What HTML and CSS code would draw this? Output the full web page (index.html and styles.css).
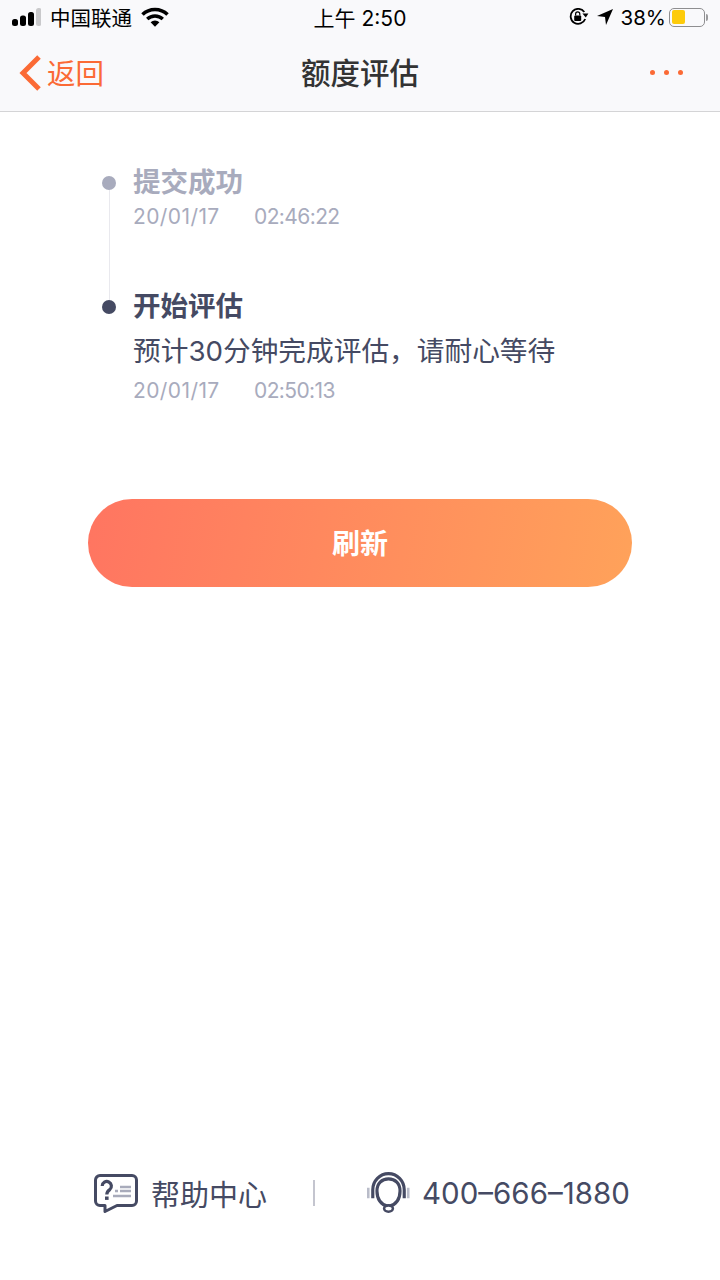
FILE: index.html
```html
<!DOCTYPE html>
<html lang="zh-CN">

<head>
    <meta charset="UTF-8">
    <meta name="viewport" content="width=device-width, initial-scale=1.0">
    <title>额度评估</title>
    <link rel="stylesheet" href="styles.css">
</head>

<body>
    <div class="page">
        <header class="top">
            <div class="status">
                <div class="status-left">
                    <svg class="signal" width="29" height="18" viewBox="0 0 29 18">
                        <rect x="0" y="11" width="6" height="7" rx="2.5" fill="#000" />
                        <rect x="8" y="7.500" width="6" height="10.500" rx="2.500" fill="#000" />
                        <rect x="16" y="4" width="6" height="14" rx="2.500" fill="#000" />
                        <rect x="24" y="0" width="5.500" height="18" rx="2.500" fill="#c9c9cb" />
                    </svg>
                    <span class="carrier">中国联通</span>
                    <svg class="wifi" width="28" height="20" viewBox="0 0 28 20">
                        <path d="M1.500 7.500 A18 18 0 0 1 26.500 7.500" fill="none" stroke="#000" stroke-width="3.600" />
                        <path d="M6.200 12 A11.500 11.500 0 0 1 21.800 12" fill="none" stroke="#000" stroke-width="3.400" />
                        <path d="M9.600 15.200 A6.600 6.600 0 0 1 18.400 15.200 L14 19.800 Z" fill="#000" />
                    </svg>
                </div>
                <div class="status-time">上午 2:50</div>
                <div class="status-right">
                    <svg width="20" height="18" viewBox="0 0 20 18">
                        <path d="M15.300 4 A7.500 7.500 0 1 0 16.200 11" fill="none" stroke="#000" stroke-width="1.800" />
                        <path d="M13.400 5.500 L19.400 5.500 L16.800 9.400 Z" fill="#000" />
                        <rect x="5.200" y="7.400" width="7" height="5.600" rx="1" fill="#000" />
                        <path d="M6.600 7.400 V6 A2.100 2.100 0 0 1 10.800 6 V7.400" fill="none" stroke="#000" stroke-width="1.200" />
                    </svg>
                    <svg class="arrow" width="16" height="16" viewBox="0 0 16 16">
                        <path d="M16 0 L0 7 L8 8 L9 16 Z" fill="#000" />
                    </svg>
                    <span class="percent">38%</span>
                    <div class="battery">
                        <div class="battery-body">
                            <div class="battery-fill"></div>
                        </div>
                        <div class="battery-cap"></div>
                    </div>
                </div>
            </div>
            <nav class="nav">
                <div class="back">
                    <svg width="24" height="38" viewBox="0 0 24 38">
                        <path d="M21 3 L5 19 L21 35" fill="none" stroke="#fb6a35" stroke-width="5" />
                    </svg>
                    <span>返回</span>
                </div>
                <h1 class="nav-title">额度评估</h1>
                <div class="more">
                    <i></i><i></i><i></i>
                </div>
            </nav>
        </header>

        <section class="steps">
            <div class="step step-done">
                <div class="marker">
                    <div class="dot"></div>
                    <div class="line"></div>
                </div>
                <div class="step-body">
                    <div class="step-title">提交成功</div>
                    <div class="step-time"><span>20/01/17</span><span>02:46:22</span></div>
                </div>
            </div>
            <div class="step step-now">
                <div class="marker">
                    <div class="dot"></div>
                </div>
                <div class="step-body">
                    <div class="step-title">开始评估</div>
                    <div class="step-desc">预计30分钟完成评估，请耐心等待</div>
                    <div class="step-time"><span>20/01/17</span><span>02:50:13</span></div>
                </div>
            </div>
        </section>

        <button class="refresh">刷新</button>

        <footer class="foot">
            <div class="help">
                <svg width="44" height="39" viewBox="0 0 44 39">
                    <path d="M6 1.500 H38 A4.500 4.500 0 0 1 42.500 6 V27 A4.500 4.500 0 0 1 38 31.500 H23 L11 37.500 V31.500 H6 A4.500 4.500 0 0 1 1.500 27 V6 A4.500 4.500 0 0 1 6 1.500 Z" fill="none" stroke="#454a63" stroke-width="3" stroke-linejoin="round" />
                    <path d="M8.200 12 A4.600 4.600 0 1 1 15.800 15.600 C13.800 17 12.800 17.800 12.800 20.500" fill="none" stroke="#454a63" stroke-width="3.200" />
                    <rect x="11" y="22.500" width="3.600" height="3.400" fill="#454a63" />
                    <path d="M21 17 H24 M26 13 H37 M26 17 H37 M19 22 H37" stroke="#a8abbb" stroke-width="2.400" fill="none" />
                </svg>
                <span>帮助中心</span>
            </div>
            <div class="foot-line"></div>
            <div class="phone">
                <svg width="43" height="42" viewBox="0 0 41 40">
                    <path d="M1.200 15 V25 M39.300 15 V25" stroke="#b9bcc9" stroke-width="2.500" fill="none" />
                    <path d="M5.500 25 V17 A15 15.500 0 0 1 35.500 17 V25" fill="none" stroke="#454a63" stroke-width="3" />
                    <path d="M20.500 33 C13 31 9.500 25 9.500 18 C9.500 11 14 6.500 20.500 6.500 C27 6.500 31.500 11 31.500 18 C31.500 25 28 31 20.500 33" fill="none" stroke="#454a63" stroke-width="3" />
                    <ellipse cx="20.500" cy="34.800" rx="4.200" ry="3" fill="#fff" stroke="#454a63" stroke-width="2.400" />
                </svg>
                <span>400–666–1880</span>
            </div>
        </footer>
    </div>
</body>

</html>
```

FILE: styles.css
```css
* {
    margin: 0;
    padding: 0;
    box-sizing: border-box;
}

body {
    background: #fff;
    font-family: Inter, 'Noto Sans CJK SC', sans-serif;
}

.page {
    display: flex;
    flex-direction: column;
    height: 1280px;
    overflow: hidden;
}

.top {
    background: #f9f9fb;
    border-bottom: 1px solid #d4d4d6;
    height: 112px;
}

.status {
    display: grid;
    grid-template-columns: 1fr auto 1fr;
    align-items: center;
    height: 34px;
    font-size: 20.500px;
    color: #000;
}

.status-left {
    display: flex;
    align-items: center;
    padding-left: 12px;
}

.signal {
    margin-right: 9px;
}

.wifi {
    margin-left: 9px;
}

.status-time {
    font-size: 21px;
}

.status-right {
    display: flex;
    align-items: center;
    justify-content: flex-end;
    padding-right: 12px;
}

.arrow {
    margin-left: 8px;
}

.percent {
    margin-left: 8px;
}

.battery {
    display: flex;
    align-items: center;
    margin-left: 3px;
}

.battery-body {
    width: 36px;
    height: 19px;
    border: 1.500px solid #8e8e90;
    border-radius: 5px;
    padding: 1.500px;
}

.battery-fill {
    width: 13px;
    height: 100%;
    border-radius: 2px;
    background: #fdcb0a;
}

.battery-cap {
    width: 2px;
    height: 7px;
    margin-left: 1px;
    border-radius: 0 2px 2px 0;
    background: #9a9a9c;
}

.nav {
    display: grid;
    grid-template-columns: 1fr auto 1fr;
    align-items: center;
    height: 74px;
}

.back {
    display: flex;
    align-items: center;
    gap: 5px;
    padding-left: 18px;
    font-size: 28.500px;
    color: #fb6a35;
}

.back svg {
    margin-top: 4px;
}

.nav-title {
    font-size: 29.500px;
    font-weight: 500;
    color: #333;
}

.more {
    display: flex;
    justify-content: flex-end;
    gap: 9px;
    margin-top: 2px;
    padding-right: 37px;
}

.more i {
    width: 5px;
    height: 5px;
    border-radius: 50%;
    background: #fb6a35;
}

.steps {
    padding: 53px 0 0 102px;
}

.step {
    display: flex;
    gap: 17px;
}

.step-done {
    height: 124px;
}

.marker {
    display: flex;
    flex-direction: column;
    align-items: center;
    width: 14px;
    padding-top: 11px;
}

.dot {
    width: 14px;
    height: 14px;
    border-radius: 50%;
    flex-shrink: 0;
}

.line {
    flex: 1;
    width: 1px;
    background: #e9e9ee;
    margin-bottom: -11px;
}

.step-title {
    font-size: 27.500px;
    line-height: 34px;
    font-weight: 700;
}

.step-done .dot {
    background: #a8abbd;
}

.step-done .step-title {
    color: #a8abbd;
}

.step-now .dot {
    background: #454a63;
}

.step-now .step-title {
    color: #454a63;
}

.step-desc {
    margin-top: 11px;
    font-size: 27.700px;
    line-height: 34px;
    color: #454a63;
}

.step-time {
    display: flex;
    margin-top: 4px;
    font-size: 21px;
    line-height: 28px;
    color: #a8abbd;
}

.step-time span:first-child {
    width: 121px;
    letter-spacing: 0.400px;
}

.step-time span:last-child {
    letter-spacing: -0.600px;
}

.step-now .step-time {
    margin-top: 9px;
}

.refresh {
    align-self: center;
    width: 544px;
    height: 88px;
    margin-top: 94px;
    padding-bottom: 3px;
    border: 0;
    border-radius: 44px;
    background-image: linear-gradient(100deg, #ff7561, #ffa25a);
    color: #fff;
    font-family: inherit;
    font-size: 28px;
    font-weight: 700;
}

.foot {
    display: flex;
    align-items: center;
    margin-top: auto;
    margin-bottom: 66px;
    padding-left: 94px;
    color: #454a63;
}

.help,
.phone {
    display: flex;
    align-items: center;
}

.help span {
    margin-left: 13px;
    font-size: 29px;
}

.foot-line {
    width: 2px;
    height: 26px;
    margin: 0 52px 0 46px;
    background: #c4c5cf;
}

.phone span {
    margin-left: 12px;
    font-size: 29.500px;
}
```
